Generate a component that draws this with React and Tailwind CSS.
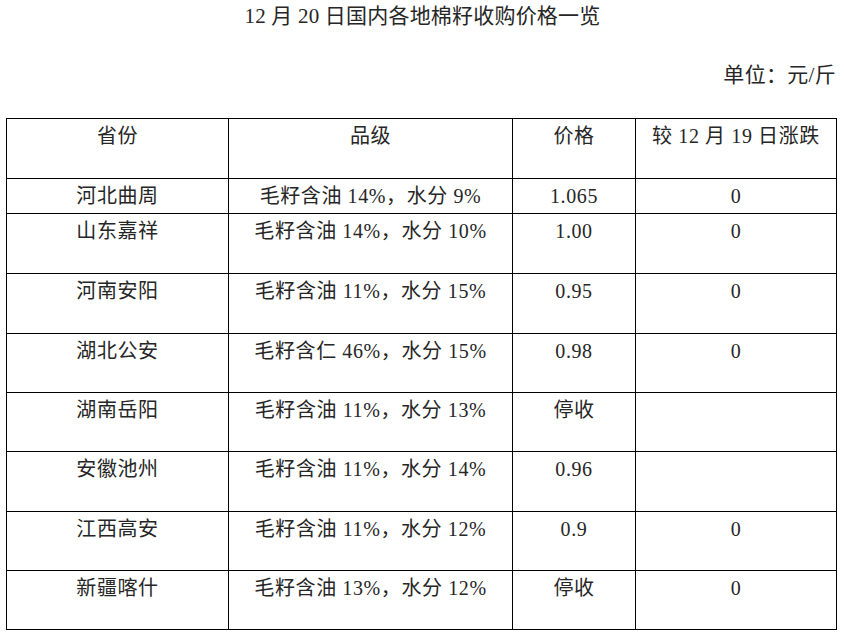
import React from 'react';

const rows = [
  { area: '河北曲周', grade: '毛籽含油 14%，水分 9%', price: '1.065', diff: '0', h: 'h-[35px]' },
  { area: '山东嘉祥', grade: '毛籽含油 14%，水分 10%', price: '1.00', diff: '0', h: 'h-[60px]' },
  { area: '河南安阳', grade: '毛籽含油 11%，水分 15%', price: '0.95', diff: '0', h: 'h-[60px]' },
  { area: '湖北公安', grade: '毛籽含仁 46%，水分 15%', price: '0.98', diff: '0', h: 'h-[59px]' },
  { area: '湖南岳阳', grade: '毛籽含油 11%，水分 13%', price: '停收', diff: '', h: 'h-[59px]' },
  { area: '安徽池州', grade: '毛籽含油 11%，水分 14%', price: '0.96', diff: '', h: 'h-[60px]' },
  { area: '江西高安', grade: '毛籽含油 11%，水分 12%', price: '0.9', diff: '0', h: 'h-[59px]' },
  { area: '新疆喀什', grade: '毛籽含油 13%，水分 12%', price: '停收', diff: '0', h: 'h-[59px]' },
];

const cell = 'border border-black align-top text-center p-0 leading-[34px] text-[20px] tracking-[0.6px]';

const App = () => {
  return (
    <div
      className="w-[844px] h-[639px] bg-white text-[#262626]"
      style={{ fontFamily: '"Liberation Serif", "Noto Sans CJK SC", serif' }}
    >
      <div className="text-center leading-[30px] pt-[1px] pl-[1px] text-[21px] tracking-[0.2px]">
        12 月 20 日国内各地棉籽收购价格一览
      </div>
      <div className="text-right leading-[30px] mt-[29px] pr-[8px] text-[21px] tracking-[0.3px]">单位：元/斤</div>
      <table className="border-collapse ml-[6px] mt-[28px] w-[830px] table-fixed">
        <colgroup>
          <col className="w-[222px]" />
          <col className="w-[284px]" />
          <col className="w-[123px]" />
          <col className="w-[201px]" />
        </colgroup>
        <tbody>
          <tr className="h-[60px]">
            <td className={cell}>省份</td>
            <td className={cell}>品级</td>
            <td className={cell}>价格</td>
            <td className={cell}>较 12 月 19 日涨跌</td>
          </tr>
          {rows.map((r) => (
            <tr key={r.area} className={r.h}>
              <td className={cell}>{r.area}</td>
              <td className={cell}>{r.grade}</td>
              <td className={cell}>{r.price}</td>
              <td className={cell}>{r.diff}</td>
            </tr>
          ))}
        </tbody>
      </table>
    </div>
  );
};

export default App;
